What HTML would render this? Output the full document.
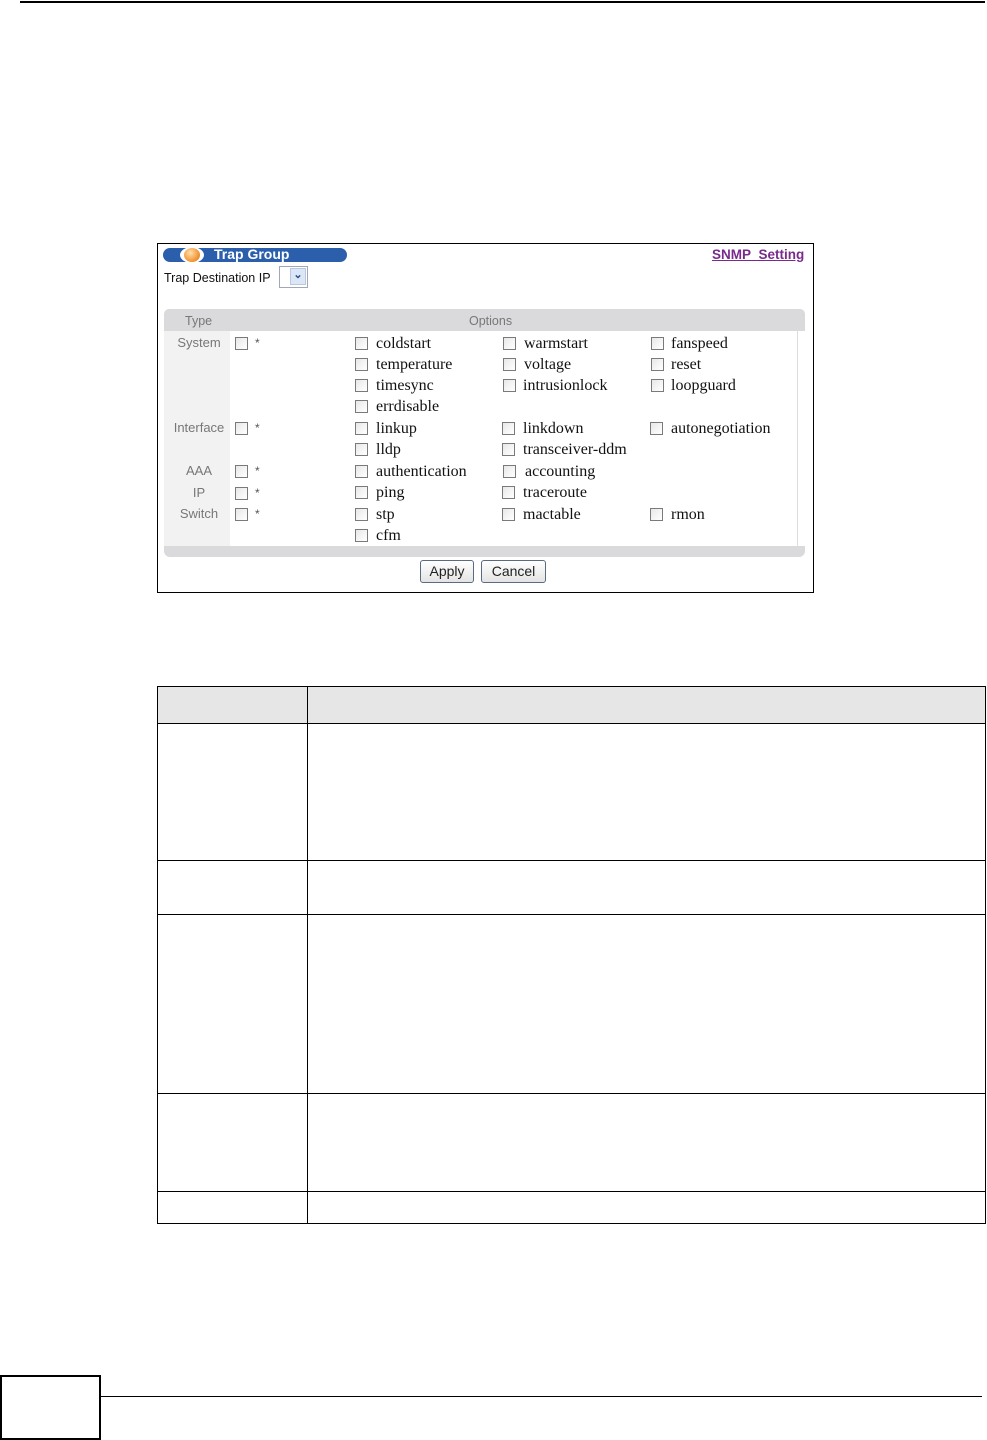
<!DOCTYPE html>
<html><head><meta charset="utf-8"><style>
*{margin:0;padding:0;box-sizing:border-box}
body{width:987px;height:1440px;background:#fff;position:relative;overflow:hidden;font-family:"Liberation Sans",sans-serif}
.a{position:absolute}
.cb{position:absolute;width:13px;height:13px;border:1px solid #7a7a7a;background:linear-gradient(135deg,#e8e8e8,#fff)}
.op{position:absolute;font-family:"Liberation Serif",serif;font-size:16px;color:#111;line-height:16px;letter-spacing:0px}
.ty{position:absolute;font-size:13px;color:#777;width:70px;text-align:center;line-height:14px}
.st{position:absolute;font-size:12px;color:#555}
.hl{position:absolute;height:1px;background:#000}
.vl{position:absolute;width:1px;background:#000}
.btn{position:absolute;height:23px;border:1px solid #5a6a80;border-radius:3px;background:linear-gradient(#fff,#e4e4e4);font-size:14px;color:#222;text-align:center;line-height:21px}
</style></head><body>
<div class="hl" style="left:20px;top:1px;width:965px;height:2px"></div>

<div class="a" style="left:157px;top:243px;width:657px;height:350px;border:1px solid #000"></div>
<div class="a" style="left:163px;top:248px;width:184px;height:14px;background:#2b5fab;border-radius:7px"></div>
<div class="a" style="left:180px;top:247px;width:24px;height:16px;border-radius:50%;background:#fff"></div>
<div class="a" style="left:184px;top:248px;width:16px;height:14px;border-radius:50%;background:radial-gradient(circle at 40% 35%,#ffe0b0,#f39a3a 60%,#d86a10)"></div>
<div class="a" style="left:214px;top:246px;font-size:14px;font-weight:bold;color:#fff;line-height:17px">Trap Group</div>
<div class="a" style="left:712px;top:247px;font-size:13.5px;font-weight:bold;color:#7a2a8c;text-decoration:underline;line-height:16px">SNMP&nbsp; Setting</div>
<div class="a" style="left:164px;top:271px;font-size:12.5px;color:#111;line-height:15px">Trap Destination IP</div>
<div class="a" style="left:279px;top:266px;width:29px;height:22px;border:1px solid #a0a8b8;background:#fff"></div>
<div class="a" style="left:290px;top:268px;width:16px;height:17px;background:#dbe6f6;border:1px solid #b9c8e0;color:#2a4d8a;font-size:11px;font-weight:bold;text-align:center;line-height:13px">&#8964;</div>

<div class="a" style="left:164px;top:309px;width:641px;height:22px;background:#dadadd;border-radius:5px 5px 0 0"></div>
<div class="a" style="left:185px;top:314px;font-size:12.5px;color:#777">Type</div>
<div class="a" style="left:469px;top:314px;font-size:12.5px;color:#777">Options</div>
<div class="a" style="left:164px;top:331px;width:66px;height:215px;background:#f2f2f2"></div>
<div class="a" style="left:797px;top:331px;width:1px;height:215px;background:#ddd"></div>
<div class="a" style="left:164px;top:546px;width:641px;height:11px;background:#dadadd;border-radius:0 0 6px 6px"></div>

<div class="ty" style="left:164px;top:336px">System</div>
<div class="ty" style="left:164px;top:421px">Interface</div>
<div class="ty" style="left:164px;top:464px">AAA</div>
<div class="ty" style="left:164px;top:486px">IP</div>
<div class="ty" style="left:164px;top:507px">Switch</div>
<div class="cb" style="left:235px;top:337px"></div><div class="st" style="left:255px;top:336px">*</div>
<div class="cb" style="left:235px;top:422px"></div><div class="st" style="left:255px;top:421px">*</div>
<div class="cb" style="left:235px;top:465px"></div><div class="st" style="left:255px;top:464px">*</div>
<div class="cb" style="left:235px;top:487px"></div><div class="st" style="left:255px;top:486px">*</div>
<div class="cb" style="left:235px;top:508px"></div><div class="st" style="left:255px;top:507px">*</div>

<div class="cb" style="left:355px;top:337px"></div><div class="op" style="left:376px;top:336px">coldstart</div>
<div class="cb" style="left:503px;top:337px"></div><div class="op" style="left:524px;top:336px">warmstart</div>
<div class="cb" style="left:651px;top:337px"></div><div class="op" style="left:671px;top:336px">fanspeed</div>
<div class="cb" style="left:355px;top:358px"></div><div class="op" style="left:376px;top:357px">temperature</div>
<div class="cb" style="left:503px;top:358px"></div><div class="op" style="left:524px;top:357px">voltage</div>
<div class="cb" style="left:651px;top:358px"></div><div class="op" style="left:671px;top:357px">reset</div>
<div class="cb" style="left:355px;top:379px"></div><div class="op" style="left:376px;top:378px">timesync</div>
<div class="cb" style="left:503px;top:379px"></div><div class="op" style="left:523px;top:378px">intrusionlock</div>
<div class="cb" style="left:651px;top:379px"></div><div class="op" style="left:671px;top:378px">loopguard</div>
<div class="cb" style="left:355px;top:400px"></div><div class="op" style="left:376px;top:399px">errdisable</div>
<div class="cb" style="left:355px;top:422px"></div><div class="op" style="left:376px;top:421px">linkup</div>
<div class="cb" style="left:502px;top:422px"></div><div class="op" style="left:523px;top:421px">linkdown</div>
<div class="cb" style="left:650px;top:422px"></div><div class="op" style="left:671px;top:421px">autonegotiation</div>
<div class="cb" style="left:355px;top:443px"></div><div class="op" style="left:376px;top:442px">lldp</div>
<div class="cb" style="left:502px;top:443px"></div><div class="op" style="left:523px;top:442px">transceiver-ddm</div>
<div class="cb" style="left:355px;top:465px"></div><div class="op" style="left:376px;top:464px">authentication</div>
<div class="cb" style="left:503px;top:465px"></div><div class="op" style="left:525px;top:464px">accounting</div>
<div class="cb" style="left:355px;top:486px"></div><div class="op" style="left:376px;top:485px">ping</div>
<div class="cb" style="left:502px;top:486px"></div><div class="op" style="left:523px;top:485px">traceroute</div>
<div class="cb" style="left:355px;top:508px"></div><div class="op" style="left:376px;top:507px">stp</div>
<div class="cb" style="left:502px;top:508px"></div><div class="op" style="left:523px;top:507px">mactable</div>
<div class="cb" style="left:650px;top:508px"></div><div class="op" style="left:671px;top:507px">rmon</div>
<div class="cb" style="left:355px;top:529px"></div><div class="op" style="left:376px;top:528px">cfm</div>

<div class="btn" style="left:420px;top:560px;width:54px">Apply</div>
<div class="btn" style="left:481px;top:560px;width:65px">Cancel</div>

<div class="a" style="left:157px;top:687px;width:829px;height:37px;background:#e6e6e6"></div>
<div class="hl" style="left:157px;top:686px;width:829px"></div>
<div class="hl" style="left:157px;top:723px;width:829px"></div>
<div class="hl" style="left:157px;top:860px;width:829px"></div>
<div class="hl" style="left:157px;top:914px;width:829px"></div>
<div class="hl" style="left:157px;top:1093px;width:829px"></div>
<div class="hl" style="left:157px;top:1191px;width:829px"></div>
<div class="hl" style="left:157px;top:1223px;width:829px"></div>
<div class="vl" style="left:157px;top:686px;height:538px"></div>
<div class="vl" style="left:307px;top:686px;height:538px"></div>
<div class="vl" style="left:985px;top:686px;height:538px"></div>

<div class="a" style="left:0;top:1375px;width:101px;height:65px;border:2px solid #000"></div>
<div class="hl" style="left:100px;top:1396px;width:882px"></div>
</body></html>
